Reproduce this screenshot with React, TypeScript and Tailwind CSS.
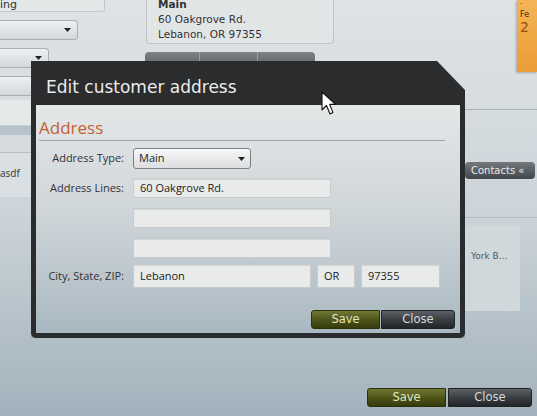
const appFont = "font-['DejaVu_Sans',sans-serif]";
const formFont = "font-['Open_Sans','Liberation_Sans',sans-serif]";

const Arrow = () => (
  <svg width="7" height="4" viewBox="0 0 7 4" className="shrink-0">
    <path d="M0 0 L7 0 L3.5 4 Z" fill="#222" />
  </svg>
);

// dropdown stub on the page behind the dialog
const BgSelect = ({ width }: { width: string }) => (
  <div
    className={`${width} h-[20px] flex items-center justify-end pr-[6px] rounded-r-[4px] border border-l-0 border-[#a9aeb2] bg-linear-to-b from-[#eef0f1] to-[#d4d8db]`}
  >
    <Arrow />
  </div>
);

const saveCls = `h-[19px] rounded-l-[3px] border border-[#2d300c] bg-linear-to-b from-[#717834] via-[#4f5519] to-[#363b0c] text-[#e3e5c4] text-[11.5px] ${appFont}`;
const closeCls = `h-[19px] rounded-r-[3px] border border-[#202326] bg-linear-to-b from-[#5d6267] via-[#3b3f44] to-[#222528] text-[#d6d9dc] text-[11.5px] ${appFont}`;

const Field = ({ w, value, h = "h-[20px]" }: { w: string; value?: string; h?: string }) => (
  <div
    className={`${w} ${h} flex items-center px-[6px] bg-[#e9eaea] border border-[#c9cccd] shadow-[inset_0_1px_0_#d2d4d5] text-[11px] text-[#222] ${formFont}`}
  >
    {value}
  </div>
);

export default function App() {
  return (
    <div className="relative w-[537px] h-[416px] overflow-hidden bg-linear-to-b from-[#dfe3e5] via-[#cdd5da] to-[#a2b2bc]">
      {/* page behind the dialog */}
      <div className="flex h-[388px]">
        <div className="w-[108px] flex flex-col">
          <div className={`w-[105px] h-[13px] border-b border-r border-[#c3c7ca] bg-[#e4e7e8] rounded-br-[3px] text-[11px] leading-[11px] text-[#333] -mt-[1px] ${appFont}`}>
            ing
          </div>
          <div className="mt-[8px]"><BgSelect width="w-[78px]" /></div>
          <div className="mt-[8px]"><BgSelect width="w-[49px]" /></div>
          <div className="mt-[8px]"><BgSelect width="w-[78px]" /></div>
          <div className="mt-[4px] h-[26px] bg-[#e6e9ea] border-b border-[#c8cdd0]" />
          <div className="h-[9px] bg-[#b7c3cb]" />
          <div className="h-[18px] bg-[#d5dbde] border-b border-[#b9c0c4]" />
          <div className={`h-[44px] bg-[#d9dfe2] pt-[13px] text-[10px] text-[#333] ${formFont}`}>asdf</div>
        </div>

        <div className="ml-[37px] w-[189px] flex flex-col">
          <div className={`ml-[1px] h-[47px] rounded-b-[4px] border border-t-0 border-[#c0c5c8] bg-[#e2e5e6] pl-[11px] text-[10.5px] leading-[15px] text-[#333] -mt-[3px] ${appFont}`}>
            <div className="font-bold">Main</div>
            <div>60 Oakgrove Rd.</div>
            <div>Lebanon, OR 97355</div>
          </div>
          <div className="mt-[8px] w-[170px] h-[16px] flex rounded-t-[4px] overflow-hidden bg-linear-to-b from-[#7d8286] to-[#5c6065]">
            <div className="w-[55px] border-r border-[#9a9ea2]" />
            <div className="w-[58px] border-r border-[#9a9ea2]" />
          </div>
        </div>

        <div className="flex-1" />

        <div className="w-[72px] flex flex-col">
          <div className={`ml-auto w-[20px] h-[72px] bg-linear-to-b from-[#f4b455] to-[#eb9c36] shadow-[-1px_1px_2px_rgba(0,0,0,0.25)] text-[8px] leading-[10px] text-[#3a2a10] pl-[3px] ${appFont}`}>
            <div className="text-[#b02020]">·</div>
            <div>Fe</div>
            <div className="text-[14px] leading-[14px] text-[#8a5410]">2</div>
          </div>
          <div className="mt-[37px] h-[1px] bg-[#a9b0b4]" />
          <div className="mt-[52px] flex">
            <div className={`w-[70px] h-[17px] rounded-[4px] bg-linear-to-b from-[#74797e] to-[#43474b] text-[#e8eaec] text-[10px] leading-[17px] pl-[6px] ${appFont}`}>
              Contacts «
            </div>
          </div>
          <div className="mt-[38px] h-[1px] bg-[#b6bdc1]" />
          <div className={`mt-[7px] w-[55px] h-[86px] bg-[#d0d8dc] text-[9px] text-[#555] pt-[25px] pl-[6px] ${appFont}`}>
            York B...
          </div>
        </div>
      </div>

      <div className="flex justify-end pr-[5px]">
        <button className={`w-[79px] ${saveCls}`}>Save</button>
        <div className="w-[2px]" />
        <button className={`w-[84px] ${closeCls}`}>Close</button>
      </div>

      {/* modal dialog */}
      <div className="absolute left-[31px] top-[61px] w-[434px] h-[277px] rounded-b-[5px] bg-[#2b2c2d] shadow-[0_2px_6px_rgba(0,0,0,0.35)] [clip-path:polygon(0_0,406px_0,100%_29px,100%_100%,0_100%)] flex flex-col">
        <div className={`h-[44px] flex items-center pt-[9px] pl-[15px] text-[17px] text-[#ebebeb] ${appFont}`}>
          Edit customer address
        </div>
        <div className="mx-[5px] mb-[5px] flex-1 bg-linear-to-b from-[#e5e7e8] via-[#cdd4d8] to-[#a9b8c1] px-[3px] pt-[13px] flex flex-col">
          <div className={`text-[17px] leading-[20px] text-[#c4622f] ${formFont}`}>Address</div>
          <div className="mt-[2px] mr-[12px] h-[1px] bg-[#9ea5a9]" />

          <div className={`mt-[7px] grid grid-cols-[85px_1fr] gap-x-[9px] text-[11px] text-[#333] ${formFont}`}>
            <div className="h-[21px] flex items-center justify-end">Address Type:</div>
            <div className="w-[118px] h-[21px] flex items-center justify-between px-[5px] rounded-[3px] border border-[#7d8286] bg-linear-to-b from-[#f7f7f7] to-[#dcdedf] text-[#222]">
              Main
              <Arrow />
            </div>

            <div className="mt-[9px] h-[20px] flex items-center justify-end">Address Lines:</div>
            <div className="mt-[9px] flex flex-col gap-[10px]">
              <Field w="w-[198px]" value="60 Oakgrove Rd." />
              <Field w="w-[198px]" />
              <Field w="w-[198px]" />
            </div>

            <div className="mt-[6px] h-[24px] flex items-center justify-end">City, State, ZIP:</div>
            <div className="mt-[6px] flex gap-[6px]">
              <Field w="w-[178px]" h="h-[24px]" value="Lebanon" />
              <Field w="w-[38px]" h="h-[24px]" value="OR" />
              <Field w="w-[79px]" h="h-[24px]" value="97355" />
            </div>
          </div>

          <div className="mt-auto mb-[4px] flex justify-end pr-[2px]">
            <button className={`w-[69px] ${saveCls}`}>Save</button>
            <div className="w-[1px]" />
            <button className={`w-[74px] ${closeCls}`}>Close</button>
          </div>
        </div>
      </div>

      {/* mouse pointer */}
      <svg className="absolute left-[321px] top-[91px]" width="16" height="25" viewBox="0 0 16 25">
        <path d="M1 1 L1 19 L5.5 14.5 L9 23 L12 21.6 L8.6 13.4 L14.5 13.4 Z" fill="#fff" stroke="#111" strokeWidth="1.1" strokeLinejoin="round" />
      </svg>
    </div>
  );
}
